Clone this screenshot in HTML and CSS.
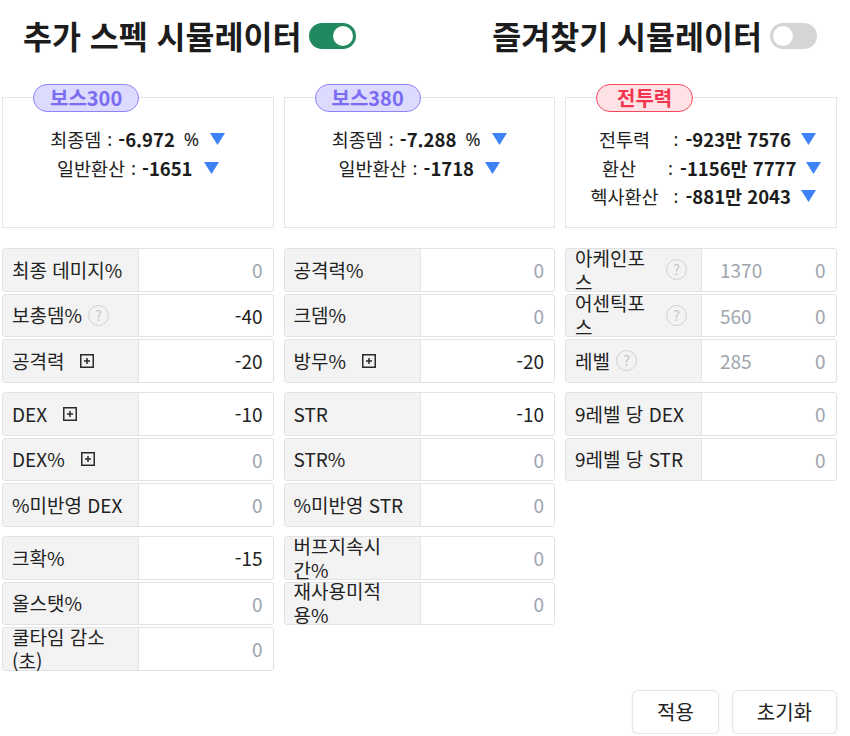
FILE: index.html
```html
<!DOCTYPE html>
<html lang="ko">
<head>
<meta charset="utf-8">
<title>추가 스펙 시뮬레이터</title>
<link rel="stylesheet" href="styles.css">
</head>
<body>
<div class="page">
  <header class="top">
    <div class="title-wrap">
      <h1 class="title">추가 스펙 시뮬레이터</h1>
      <span class="switch on"><span class="knob"></span></span>
    </div>
    <div class="title-wrap">
      <h1 class="title">즐겨찾기 시뮬레이터</h1>
      <span class="switch off"><span class="knob"></span></span>
    </div>
  </header>

  <main class="grid">
    <!-- column 1 -->
    <section class="col">
      <div class="card">
        <span class="badge purple">보스300</span>
        <p class="stat">최종뎀<span class="c">:</span><b>-6.972</b><span class="pct">%</span><svg class="tri" viewBox="0 0 15 12"><path d="M0 0H15L7.5 12Z"/></svg></p>
        <p class="stat">일반환산<span class="c">:</span><b>-1651</b><svg class="tri" viewBox="0 0 15 12"><path d="M0 0H15L7.5 12Z"/></svg></p>
      </div>
      <div class="group">
        <div class="field"><div class="lbl"><span class="t">최종 데미지%</span></div><div class="val"><span class="zero">0</span></div></div>
        <div class="field"><div class="lbl"><span class="t">보총뎀%</span><span class="help">?</span></div><div class="val"><span>-40</span></div></div>
        <div class="field"><div class="lbl"><span class="t">공격력</span><svg class="plus" viewBox="0 0 14 14"><rect x="0.75" y="0.75" width="12.5" height="12.5"/><path d="M4 7H10M7 4V10"/></svg></div><div class="val"><span>-20</span></div></div>
      </div>
      <div class="group">
        <div class="field"><div class="lbl"><span class="t">DEX</span><svg class="plus" viewBox="0 0 14 14"><rect x="0.75" y="0.75" width="12.5" height="12.5"/><path d="M4 7H10M7 4V10"/></svg></div><div class="val"><span>-10</span></div></div>
        <div class="field"><div class="lbl"><span class="t">DEX%</span><svg class="plus" viewBox="0 0 14 14"><rect x="0.75" y="0.75" width="12.5" height="12.5"/><path d="M4 7H10M7 4V10"/></svg></div><div class="val"><span class="zero">0</span></div></div>
        <div class="field"><div class="lbl"><span class="t">%미반영 DEX</span></div><div class="val"><span class="zero">0</span></div></div>
      </div>
      <div class="group">
        <div class="field"><div class="lbl"><span class="t">크확%</span></div><div class="val"><span>-15</span></div></div>
        <div class="field"><div class="lbl"><span class="t">올스탯%</span></div><div class="val"><span class="zero">0</span></div></div>
        <div class="field"><div class="lbl"><span class="t">쿨타임 감소 (초)</span></div><div class="val"><span class="zero">0</span></div></div>
      </div>
    </section>

    <!-- column 2 -->
    <section class="col">
      <div class="card">
        <span class="badge purple">보스380</span>
        <p class="stat">최종뎀<span class="c">:</span><b>-7.288</b><span class="pct">%</span><svg class="tri" viewBox="0 0 15 12"><path d="M0 0H15L7.5 12Z"/></svg></p>
        <p class="stat">일반환산<span class="c">:</span><b>-1718</b><svg class="tri" viewBox="0 0 15 12"><path d="M0 0H15L7.5 12Z"/></svg></p>
      </div>
      <div class="group">
        <div class="field"><div class="lbl"><span class="t">공격력%</span></div><div class="val"><span class="zero">0</span></div></div>
        <div class="field"><div class="lbl"><span class="t">크뎀%</span></div><div class="val"><span class="zero">0</span></div></div>
        <div class="field"><div class="lbl"><span class="t">방무%</span><svg class="plus" viewBox="0 0 14 14"><rect x="0.75" y="0.75" width="12.5" height="12.5"/><path d="M4 7H10M7 4V10"/></svg></div><div class="val"><span>-20</span></div></div>
      </div>
      <div class="group">
        <div class="field"><div class="lbl"><span class="t">STR</span></div><div class="val"><span>-10</span></div></div>
        <div class="field"><div class="lbl"><span class="t">STR%</span></div><div class="val"><span class="zero">0</span></div></div>
        <div class="field"><div class="lbl"><span class="t">%미반영 STR</span></div><div class="val"><span class="zero">0</span></div></div>
      </div>
      <div class="group">
        <div class="field"><div class="lbl"><span class="t">버프지속시간%</span></div><div class="val"><span class="zero">0</span></div></div>
        <div class="field"><div class="lbl"><span class="t">재사용미적용%</span></div><div class="val"><span class="zero">0</span></div></div>
      </div>
    </section>

    <!-- column 3 -->
    <section class="col">
      <div class="card">
        <span class="badge red">전투력</span>
        <p class="stat3"><span class="k">전투력</span><span class="c">:</span><b>-923만 7576</b><svg class="tri" viewBox="0 0 15 12"><path d="M0 0H15L7.5 12Z"/></svg></p>
        <p class="stat3"><span class="k">환산</span><span class="c">:</span><b>-1156만 7777</b><svg class="tri" viewBox="0 0 15 12"><path d="M0 0H15L7.5 12Z"/></svg></p>
        <p class="stat3"><span class="k">헥사환산</span><span class="c">:</span><b>-881만 2043</b><svg class="tri" viewBox="0 0 15 12"><path d="M0 0H15L7.5 12Z"/></svg></p>
      </div>
      <div class="group">
        <div class="field"><div class="lbl"><span class="t grow">아케인포스</span><span class="help">?</span></div><div class="val split"><span class="sub">1370</span><span class="zero">0</span></div></div>
        <div class="field"><div class="lbl"><span class="t grow">어센틱포스</span><span class="help">?</span></div><div class="val split"><span class="sub">560</span><span class="zero">0</span></div></div>
        <div class="field"><div class="lbl"><span class="t">레벨</span><span class="help">?</span></div><div class="val split"><span class="sub">285</span><span class="zero">0</span></div></div>
      </div>
      <div class="group">
        <div class="field"><div class="lbl"><span class="t">9레벨 당 DEX</span></div><div class="val"><span class="zero">0</span></div></div>
        <div class="field"><div class="lbl"><span class="t">9레벨 당 STR</span></div><div class="val"><span class="zero">0</span></div></div>
      </div>
    </section>
  </main>

  <div class="actions">
    <button class="btn" type="button">적용</button>
    <button class="btn" type="button">초기화</button>
  </div>
</div>
</body>
</html>
```

FILE: styles.css
```css
* { box-sizing: border-box; margin: 0; padding: 0; }

body {
  margin: 0;
  background: #fff;
  color: #222;
  font-family: "Noto Sans CJK KR", "Noto Sans", sans-serif;
}

.page {
  width: 850px;
  padding-left: 2px;
}

/* header */
.top {
  display: flex;
  justify-content: space-between;
  align-items: center;
  height: 72px;
  padding: 0 33px 0 21px;
}
.title-wrap { display: flex; align-items: center; }
.title {
  font-size: 31.5px;
  font-weight: 700;
  line-height: 1;
  color: #1c1c1c;
}
.switch {
  width: 47px;
  height: 26px;
  border-radius: 13px;
  margin-left: 8px;
  display: flex;
  align-items: center;
  padding: 0 3px;
}
.switch.on { background: #21895f; justify-content: flex-end; }
.switch.off { background: #d5d5d5; justify-content: flex-start; }
.knob { width: 20px; height: 20px; border-radius: 50%; background: #fff; }

/* grid */
.grid {
  display: grid;
  grid-template-columns: repeat(3, 271.5px);
  column-gap: 10px;
  margin-top: 25px;
  align-items: start;
}
.col { display: flex; flex-direction: column; gap: 9.5px; }

/* cards */
.card {
  position: relative;
  height: 131px;
  border: 1px solid #e4e4ea;
  padding-top: 27px;
  font-size: 18.5px;
  line-height: 28.5px;
  margin-bottom: 10.5px;
}
.badge {
  position: absolute;
  top: -14px;
  left: 30px;
  height: 28px;
  padding: 0 16px;
  border-radius: 14px;
  border: 1.5px solid;
  font-weight: 700;
  font-size: 20px;
  line-height: 25px;
}
.badge.purple { color: #7a6cf2; background: #dddaff; border-color: #8e84f8; }
.badge.red { color: #f2364f; background: #ffe2e6; border-color: #f2485e; padding: 0 20px; }

.stat, .stat3 {
  display: flex;
  align-items: center;
  justify-content: center;
}
.stat b, .stat3 b { font-weight: 700; color: #1c1c1c; }
.c {
  font-family: "Noto Sans", sans-serif;
  margin: 0 6px;
}
.pct {
  font-family: "Noto Sans", sans-serif;
  margin-left: 9px;
}
.tri {
  flex: none;
  width: 15px;
  height: 12px;
  fill: #3d82f6;
  margin-left: 11px;
}
.stat3 .k { width: 78px; text-align: center; }
.stat3 .c { margin: 0 7px 0 10px; }
.stat3 .tri { margin-left: 10px; }

/* fields */
.group { display: flex; flex-direction: column; gap: 2px; }
.field {
  display: flex;
  height: 43.5px;
  border: 1px solid #e2e2e2;
  border-radius: 3px;
  font-size: 19px;
  background: #fff;
}
.lbl {
  width: 136px;
  flex: none;
  display: flex;
  align-items: center;
  padding: 0 14px 0 9px;
  background: #f3f3f3;
  border-right: 1px solid #e4e4e4;
  border-radius: 3px 0 0 3px;
  color: #222;
}
.lbl .t { line-height: 24px; min-width: 0; }
.lbl .t.grow { flex: 1 1 auto; }
.help {
  flex: none;
  width: 21px;
  height: 21px;
  margin-left: 6px;
  border: 1.5px solid #d0d0d0;
  border-radius: 50%;
  color: #c2c2c2;
  font-size: 14px;
  line-height: 18px;
  text-align: center;
}
.plus {
  flex: none;
  width: 14px;
  height: 14px;
  margin-left: 16px;
  fill: none;
  stroke: #2b2b2b;
  stroke-width: 1.5;
}
.val {
  flex: 1;
  display: flex;
  align-items: center;
  justify-content: flex-end;
  padding: 0 10px 0 18px;
  color: #222;
}
.val.split { justify-content: space-between; }
.zero, .sub { color: #9ea5ae; }

/* buttons */
.actions {
  display: flex;
  justify-content: flex-end;
  gap: 13px;
  width: 835px;
  margin-top: 19px;
}
.btn {
  height: 44px;
  padding: 0 24px;
  font-family: inherit;
  font-size: 20px;
  color: #222;
  background: #fff;
  border: 1px solid #e6e6e6;
  border-radius: 6px;
  box-shadow: 0 1px 3px rgba(0, 0, 0, 0.08);
}
```
